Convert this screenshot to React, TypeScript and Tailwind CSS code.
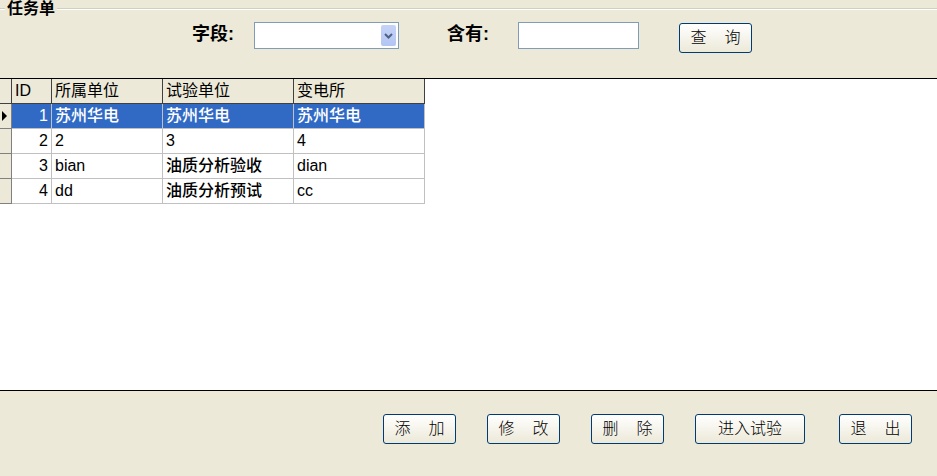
import React from "react";

const rows = [
  { id: 1, unit: "苏州华电", test: "苏州华电", station: "苏州华电" },
  { id: 2, unit: "2", test: "3", station: "4" },
  { id: 3, unit: "bian", test: "油质分析验收", station: "dian" },
  { id: 4, unit: "dd", test: "油质分析预试", station: "cc" },
];

const font = "font-['SimSun','Liberation_Sans','Noto_Sans_CJK_SC',sans-serif]";
const isCjk = (s: string) => /[\u4e00-\u9fff]/.test(s);

function XpButton({ chars, className }: { chars: string[]; className: string }) {
  return (
    <button
      className={`flex h-[30px] items-center justify-center gap-[18px] rounded-[3px] border border-[#003c74] bg-gradient-to-b from-white to-[#ece9d8] text-[16px] font-light text-black ${className}`}
    >
      {chars.map((c) => (
        <span key={c}>{c}</span>
      ))}
    </button>
  );
}

export default function App() {
  return (
    <div className={`flex h-[476px] w-[937px] flex-col overflow-hidden bg-[#ece9d8] ${font}`}>
      {/* 查询区 */}
      <div className="h-[78px] shrink-0">
        <div className="flex h-[18px] items-center">
          <div className="h-[2px] w-[5px] border-t border-[#d0d0bf] bg-white" />
          <span className="px-[2px] text-[16px] font-bold leading-[18px]">任务单</span>
          <div className="h-[2px] flex-1 border-t border-[#d0d0bf] bg-white" />
        </div>
        <div className="mt-[4px] flex items-start">
          <span className="ml-[192px] mt-[1px] w-[62px] text-[18px] font-bold leading-[22px]">字段:</span>
          <div className="flex h-[27px] w-[145px] items-center justify-end border border-[#7f9db9] bg-white p-[2px]">
            <div className="flex h-[21px] w-[15px] items-center justify-center rounded-[2px] bg-gradient-to-b from-[#c6d3f7] to-[#b3c5f3]">
              <svg width="9" height="6" viewBox="0 0 9 6">
                <path d="M1 1 L4.5 4.5 L8 1" stroke="#4d6185" strokeWidth="2" fill="none" />
              </svg>
            </div>
          </div>
          <span className="ml-[48px] mt-[1px] w-[71px] text-[18px] font-bold leading-[22px]">含有:</span>
          <div className="h-[27px] w-[121px] border border-[#7f9db9] bg-white" />
          <XpButton chars={["查", "询"]} className="ml-[40px] mt-[1px] w-[73px]" />
        </div>
      </div>

      {/* 数据表 */}
      <div className="flex-1 border-y border-black bg-white">
        <table className="border-collapse text-[16px]">
          <thead>
            <tr className="h-[24px] bg-[#ece9d8]">
              <th className="w-[11px] border-r border-b border-[#404040] p-0" />
              <th className="w-[40px] border-r border-b border-[#404040] px-[3px] text-left font-normal">ID</th>
              <th className="w-[111px] border-r border-b border-[#404040] px-[3px] text-left font-normal">所属单位</th>
              <th className="w-[131px] border-r border-b border-[#404040] px-[3px] text-left font-normal">试验单位</th>
              <th className="w-[131px] border-r border-b border-[#404040] px-[3px] text-left font-normal">变电所</th>
            </tr>
          </thead>
          <tbody>
            {rows.map((r, i) => {
              const sel = i === 0;
              const cell = `border-r border-b border-[#c0c0c0] px-[3px] ${sel ? "bg-[#316ac5] text-white" : "text-black"}`;
              const txt = (s: string) => (isCjk(s) ? "font-medium" : "font-normal");
              return (
                <tr key={r.id} className="h-[25px]">
                  <td className="border-r border-b border-[#808080] bg-[#ece9d8] p-0">
                    {sel && (
                      <svg width="11" height="12" viewBox="0 0 11 12" className="block">
                        <path d="M2 1 L7 6 L2 11 Z" fill="black" />
                      </svg>
                    )}
                  </td>
                  <td className={`${cell} text-right`}>{r.id}</td>
                  <td className={`${cell} ${txt(r.unit)}`}>{r.unit}</td>
                  <td className={`${cell} ${txt(r.test)}`}>{r.test}</td>
                  <td className={`${cell} ${txt(r.station)}`}>{r.station}</td>
                </tr>
              );
            })}
          </tbody>
        </table>
      </div>

      {/* 操作按钮 */}
      <div className="flex h-[85px] shrink-0 items-start pt-[23px]">
        <XpButton chars={["添", "加"]} className="ml-[383px] w-[73px]" />
        <XpButton chars={["修", "改"]} className="ml-[31px] w-[73px]" />
        <XpButton chars={["删", "除"]} className="ml-[31px] w-[73px]" />
        <XpButton chars={["进入试验"]} className="ml-[31px] w-[110px]" />
        <XpButton chars={["退", "出"]} className="ml-[34px] w-[73px]" />
      </div>
    </div>
  );
}
